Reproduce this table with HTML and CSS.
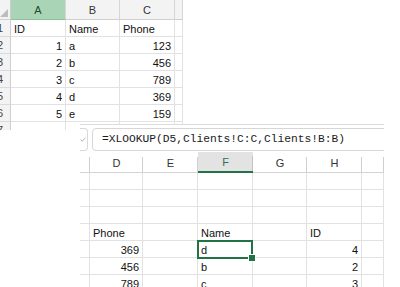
FILE: index.html
```html
<!DOCTYPE html>
<html>
<head>
<meta charset="utf-8">
<link rel="stylesheet" href="styles.css">
</head>
<body>
<div class="canvas">
  <!-- Clients sheet -->
  <div class="sheet clients">
    <div class="grid g1">
      <div class="corner"><svg width="8" height="8" viewBox="0 0 8 8"><polygon points="8,0 8,8 0,8" fill="#bdbdbd"/></svg></div>
      <div class="colhead sel">A</div>
      <div class="colhead">B</div>
      <div class="colhead">C</div>
      <div class="colhead"></div>

      <div class="rowhead">1</div><div class="cell">ID</div><div class="cell">Name</div><div class="cell">Phone</div><div class="cell"></div>
      <div class="rowhead">2</div><div class="cell num">1</div><div class="cell">a</div><div class="cell num">123</div><div class="cell"></div>
      <div class="rowhead">3</div><div class="cell num">2</div><div class="cell">b</div><div class="cell num">456</div><div class="cell"></div>
      <div class="rowhead">4</div><div class="cell num">3</div><div class="cell">c</div><div class="cell num">789</div><div class="cell"></div>
      <div class="rowhead">5</div><div class="cell num">4</div><div class="cell">d</div><div class="cell num">369</div><div class="cell"></div>
      <div class="rowhead">6</div><div class="cell num">5</div><div class="cell">e</div><div class="cell num">159</div><div class="cell"></div>
      <div class="rowhead">7</div><div class="cell"></div><div class="cell"></div><div class="cell"></div><div class="cell"></div>
    </div>
  </div>

  <!-- Lookup sheet -->
  <div class="sheet lookup">
    <div class="fxbar">
      <div class="fxside"><svg width="6" height="5" viewBox="0 0 6 5"><polyline points="0.5,2.6 2.2,4.2 5.5,0.6" fill="none" stroke="#a8a8a8" stroke-width="0.9"/></svg></div>
      <div class="fxinput">=XLOOKUP(D5,Clients!C:C,Clients!B:B)</div>
    </div>
    <div class="grid g2">
      <div class="colhead2"></div>
      <div class="colhead2">D</div>
      <div class="colhead2">E</div>
      <div class="colhead2 sel2">F</div>
      <div class="colhead2">G</div>
      <div class="colhead2">H</div>
      <div class="colhead2"></div>

      <div class="cell"></div><div class="cell"></div><div class="cell"></div><div class="cell"></div><div class="cell"></div><div class="cell"></div><div class="cell"></div>
      <div class="cell"></div><div class="cell"></div><div class="cell"></div><div class="cell"></div><div class="cell"></div><div class="cell"></div><div class="cell"></div>
      <div class="cell"></div><div class="cell"></div><div class="cell"></div><div class="cell"></div><div class="cell"></div><div class="cell"></div><div class="cell"></div>

      <div class="cell"></div><div class="cell">Phone</div><div class="cell"></div><div class="cell">Name</div><div class="cell"></div><div class="cell">ID</div><div class="cell"></div>
      <div class="cell"></div><div class="cell num">369</div><div class="cell"></div><div class="cell active">d</div><div class="cell"></div><div class="cell num">4</div><div class="cell"></div>
      <div class="cell"></div><div class="cell num">456</div><div class="cell"></div><div class="cell">b</div><div class="cell"></div><div class="cell num">2</div><div class="cell"></div>
      <div class="cell"></div><div class="cell num">789</div><div class="cell"></div><div class="cell">c</div><div class="cell"></div><div class="cell num">3</div><div class="cell"></div>
    </div>
  </div>
</div>
</body>
</html>
```

FILE: styles.css
```css
* {
  box-sizing: border-box;
}

html, body {
  margin: 0;
  padding: 0;
  background: #ffffff;
}

body {
  font-family: "Liberation Sans", Arial, sans-serif;
  font-size: 11px;
  color: #1a1a1a;
}

.canvas {
  position: relative;
  width: 400px;
  height: 287px;
  overflow: hidden;
}

.sheet {
  position: absolute;
  background: #ffffff;
  overflow: hidden;
}

/* ---------- Clients sheet ---------- */
.clients {
  left: -10px;
  top: 0;
  width: 193px;
  height: 130px;
}

.grid {
  display: grid;
}

.g1 {
  grid-template-columns: 21px 55px 54px 55px 8px;
  grid-template-rows: 20px repeat(7, 17px);
}

.corner {
  background: #f3f3f3;
  border-right: 1px solid #cfcfcf;
  border-bottom: 1px solid #cfcfcf;
  display: flex;
  justify-content: flex-end;
  align-items: flex-end;
  padding: 0 2px 2px 0;
}

.colhead {
  background: #f3f3f3;
  border-right: 1px solid #d6d6d6;
  border-bottom: 1px solid #cfcfcf;
  color: #333333;
  display: flex;
  align-items: center;
  justify-content: center;
  padding-top: 1px;
}

.colhead.sel {
  background: #a9d5b6;
  color: #1d4b2c;
  border-bottom-color: #8cbf9b;
}

.rowhead {
  background: #f3f3f3;
  border-right: 1px solid #cfcfcf;
  border-bottom: 1px solid #dadada;
  color: #444444;
  display: flex;
  align-items: center;
  justify-content: center;
}

.cell {
  border-right: 1px solid #e2e2e2;
  border-bottom: 1px solid #e2e2e2;
  padding: 1px 3px 0 3px;
  display: flex;
  align-items: center;
  white-space: nowrap;
  color: #111111;
}

.cell.num {
  justify-content: flex-end;
  padding-right: 3px;
}

/* ---------- Lookup sheet ---------- */
.lookup {
  left: 80px;
  top: 124px;
  width: 304px;
  height: 163px;
  border-top: 1px solid #dcdcdc;
}

.fxbar {
  height: 27px;
  display: flex;
  gap: 4px;
  padding-top: 3px;
  padding-bottom: 1px;
}

.fxside {
  width: 8px;
  height: 23px;
  border: 1px solid #d9d9d9;
  border-left: none;
  border-radius: 0 4px 4px 0;
  display: flex;
  align-items: center;
  justify-content: flex-start;
  padding-left: 0;
}

.fxinput {
  flex: 1;
  height: 23px;
  margin-right: -6px;
  border: 1px solid #d6d6d6;
  border-radius: 4px;
  padding-left: 9px;
  font-family: "Liberation Mono", "DejaVu Sans Mono", monospace;
  font-size: 11.25px;
  line-height: 21px;
  color: #1a1a1a;
  white-space: nowrap;
}

.g2 {
  grid-template-columns: 10px 53px 55px 55px 54px 55px 22px;
  grid-template-rows: 21px repeat(7, 17px);
}

.colhead2 {
  background: #ffffff linear-gradient(#cfcfcf, #cfcfcf) right bottom / 1px 15px no-repeat;
  border-bottom: 1px solid #d4d4d4;
  color: #333333;
  display: flex;
  align-items: center;
  justify-content: center;
  padding-top: 1px;
}

.colhead2.sel2 {
  background: #e3e3e3 linear-gradient(#c4c4c4, #c4c4c4) right bottom / 1px 15px no-repeat;
  border-bottom: 2px solid #217346;
  color: #3d6b4c;
}

.cell.active {
  position: relative;
  z-index: 1;
}

.cell.active::before {
  content: "";
  position: absolute;
  left: -1px;
  top: -1px;
  right: -1px;
  bottom: -2px;
  border: 2px solid #217346;
}

.cell.active::after {
  content: "";
  position: absolute;
  right: -4px;
  bottom: -5px;
  width: 6px;
  height: 6px;
  background: #217346;
  border: 1px solid #ffffff;
}
```
